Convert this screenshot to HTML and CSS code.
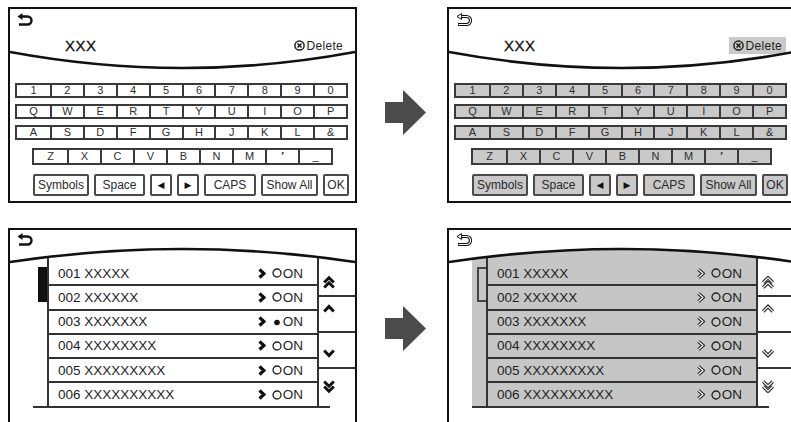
FILE: index.html
```html
<!DOCTYPE html>
<html lang="en">
<head>
  <meta charset="UTF-8">
  <title>Keyboard and list screens</title>
  <link rel="stylesheet" href="styles.css">
</head>
<body>

  <!-- icon sprite -->
  <svg class="sprite" aria-hidden="true">
    <defs>
      <symbol id="back" viewBox="0 0 16 14">
        <path d="M4,3.5 H10.5 A4,4 0 0 1 10.5,11.5 H2" fill="none" stroke="#111" stroke-width="2.4"/>
        <path d="M0.5,3.5 L5.5,0 V7 Z" fill="#111"/>
      </symbol>
      <symbol id="back-o" viewBox="0 0 16 14">
        <path d="M4,3.5 H10.5 A4,4 0 0 1 10.5,11.5 H2" fill="none" stroke="#111" stroke-width="3.2"/>
        <path d="M4,3.5 H10.5 A4,4 0 0 1 10.5,11.5 H2.6" fill="none" stroke="#fff" stroke-width="1.2"/>
        <path d="M1,3.5 L5.6,0.6 V6.4 Z" fill="#fff" stroke="#111" stroke-width="1"/>
      </symbol>
      <symbol id="delx" viewBox="0 0 11 11">
        <circle cx="5.5" cy="5.5" r="4.6" fill="none" stroke="#222" stroke-width="1.5"/>
        <path d="M3.5,3.5 L7.5,7.5 M7.5,3.5 L3.5,7.5" stroke="#222" stroke-width="1.7"/>
      </symbol>
      <symbol id="chev" viewBox="0 0 8 11">
        <polyline points="1.5,1.5 6,5.5 1.5,9.5" fill="none" stroke="#111" stroke-width="3.2"/>
      </symbol>
      <symbol id="chev-o" viewBox="0 0 8 11">
        <polyline points="1.5,1.5 6,5.5 1.5,9.5" fill="none" stroke="#222" stroke-width="3.4"/>
        <polyline points="1.5,1.5 6,5.5 1.5,9.5" fill="none" stroke="#fff" stroke-width="1.2"/>
      </symbol>
      <symbol id="ring" viewBox="0 0 10 10">
        <circle cx="5" cy="5" r="4" fill="none" stroke="#222" stroke-width="1.3"/>
      </symbol>
      <symbol id="dot" viewBox="0 0 10 10">
        <circle cx="5" cy="5.5" r="2.8" fill="#111"/>
      </symbol>
      <symbol id="up1" viewBox="0 0 12 9">
        <polyline points="1.2,7.5 6,2.5 10.8,7.5" fill="none" stroke="#111" stroke-width="3"/>
      </symbol>
      <symbol id="up2" viewBox="0 0 12 13">
        <polyline points="1.2,6.5 6,1.8 10.8,6.5" fill="none" stroke="#111" stroke-width="3"/>
        <polyline points="1.2,11.5 6,6.8 10.8,11.5" fill="none" stroke="#111" stroke-width="3"/>
      </symbol>
      <symbol id="dn1" viewBox="0 0 12 9">
        <polyline points="1.2,1.5 6,6.5 10.8,1.5" fill="none" stroke="#111" stroke-width="3"/>
      </symbol>
      <symbol id="dn2" viewBox="0 0 12 13">
        <polyline points="1.2,1.5 6,6.2 10.8,1.5" fill="none" stroke="#111" stroke-width="3"/>
        <polyline points="1.2,6.5 6,11.2 10.8,6.5" fill="none" stroke="#111" stroke-width="3"/>
      </symbol>
      <symbol id="up1-o" viewBox="0 0 12 9">
        <polyline points="1.2,7.5 6,2.5 10.8,7.5" fill="none" stroke="#222" stroke-width="3.4"/>
        <polyline points="1.2,7.5 6,2.5 10.8,7.5" fill="none" stroke="#fff" stroke-width="1.2"/>
      </symbol>
      <symbol id="up2-o" viewBox="0 0 12 13">
        <polyline points="1.2,6.5 6,1.8 10.8,6.5" fill="none" stroke="#222" stroke-width="3.4"/>
        <polyline points="1.2,6.5 6,1.8 10.8,6.5" fill="none" stroke="#fff" stroke-width="1.2"/>
        <polyline points="1.2,11.5 6,6.8 10.8,11.5" fill="none" stroke="#222" stroke-width="3.4"/>
        <polyline points="1.2,11.5 6,6.8 10.8,11.5" fill="none" stroke="#fff" stroke-width="1.2"/>
      </symbol>
      <symbol id="dn1-o" viewBox="0 0 12 9">
        <polyline points="1.2,1.5 6,6.5 10.8,1.5" fill="none" stroke="#222" stroke-width="3.4"/>
        <polyline points="1.2,1.5 6,6.5 10.8,1.5" fill="none" stroke="#fff" stroke-width="1.2"/>
      </symbol>
      <symbol id="dn2-o" viewBox="0 0 12 13">
        <polyline points="1.2,1.5 6,6.2 10.8,1.5" fill="none" stroke="#222" stroke-width="3.4"/>
        <polyline points="1.2,1.5 6,6.2 10.8,1.5" fill="none" stroke="#fff" stroke-width="1.2"/>
        <polyline points="1.2,6.5 6,11.2 10.8,6.5" fill="none" stroke="#222" stroke-width="3.4"/>
        <polyline points="1.2,6.5 6,11.2 10.8,6.5" fill="none" stroke="#fff" stroke-width="1.2"/>
      </symbol>
      <symbol id="bigarrow" viewBox="0 0 41 45">
        <polygon points="0,12 18,12 18,0 41,22.5 18,45 18,33 0,33" fill="#4b4b4b"/>
      </symbol>
    </defs>
  </svg>

  <div class="board">

    <!-- keyboard, normal -->
    <div class="screen">
      <svg class="back"><use href="#back"/></svg>
      <div class="entry">
        <span class="word">XXX</span>
        <span class="del"><svg class="delx"><use href="#delx"/></svg>Delete</span>
      </div>
      <svg class="smile" viewBox="0 0 345 20"><path d="M0,2 Q172.5,34 345,2"/></svg>
      <div class="kb">
        <div class="krow"><span>1</span><span>2</span><span>3</span><span>4</span><span>5</span><span>6</span><span>7</span><span>8</span><span>9</span><span>0</span></div>
        <div class="krow"><span>Q</span><span>W</span><span>E</span><span>R</span><span>T</span><span>Y</span><span>U</span><span>I</span><span>O</span><span>P</span></div>
        <div class="krow"><span>A</span><span>S</span><span>D</span><span>F</span><span>G</span><span>H</span><span>J</span><span>K</span><span>L</span><span>&amp;</span></div>
        <div class="krow z"><span>Z</span><span>X</span><span>C</span><span>V</span><span>B</span><span>N</span><span>M</span><span class="tick">′</span><span>_</span></div>
        <div class="fnrow">
          <span class="fn w-sym">Symbols</span>
          <span class="fn w-spc">Space</span>
          <span class="fn w-tri tri">◀</span>
          <span class="fn w-tri tri">▶</span>
          <span class="fn w-caps">CAPS</span>
          <span class="fn w-all">Show All</span>
          <span class="fn w-ok">OK</span>
        </div>
      </div>
    </div>

    <div class="arrow"><svg><use href="#bigarrow"/></svg></div>

    <!-- keyboard, greyed -->
    <div class="screen dim">
      <svg class="back"><use href="#back-o"/></svg>
      <div class="entry">
        <span class="word">XXX</span>
        <span class="del"><svg class="delx"><use href="#delx"/></svg>Delete</span>
      </div>
      <svg class="smile" viewBox="0 0 345 20"><path d="M0,2 Q172.5,34 345,2"/></svg>
      <div class="kb">
        <div class="krow"><span>1</span><span>2</span><span>3</span><span>4</span><span>5</span><span>6</span><span>7</span><span>8</span><span>9</span><span>0</span></div>
        <div class="krow"><span>Q</span><span>W</span><span>E</span><span>R</span><span>T</span><span>Y</span><span>U</span><span>I</span><span>O</span><span>P</span></div>
        <div class="krow"><span>A</span><span>S</span><span>D</span><span>F</span><span>G</span><span>H</span><span>J</span><span>K</span><span>L</span><span>&amp;</span></div>
        <div class="krow z"><span>Z</span><span>X</span><span>C</span><span>V</span><span>B</span><span>N</span><span>M</span><span class="tick">′</span><span>_</span></div>
        <div class="fnrow">
          <span class="fn w-sym">Symbols</span>
          <span class="fn w-spc">Space</span>
          <span class="fn w-tri tri">◀</span>
          <span class="fn w-tri tri">▶</span>
          <span class="fn w-caps">CAPS</span>
          <span class="fn w-all">Show All</span>
          <span class="fn w-ok">OK</span>
        </div>
      </div>
    </div>

    <!-- list, normal -->
    <div class="screen">
      <svg class="back lback"><use href="#back"/></svg>
      <svg class="arch" viewBox="0 0 345 20">
        <path class="mask" d="M0,0 V16 Q172.5,-10 345,16 V0 Z"/>
        <path class="line" d="M0,16 Q172.5,-10 345,16"/>
      </svg>
      <div class="list">
        <div class="track"><div class="thumb"></div></div>
        <div class="rows">
          <div class="row">001 XXXXX<span class="state"><svg class="chev"><use href="#chev"/></svg><svg class="ring"><use href="#ring"/></svg>ON</span></div>
          <div class="row">002 XXXXXX<span class="state"><svg class="chev"><use href="#chev"/></svg><svg class="ring"><use href="#ring"/></svg>ON</span></div>
          <div class="row">003 XXXXXXX<span class="state"><svg class="chev"><use href="#chev"/></svg><svg class="ring"><use href="#dot"/></svg>ON</span></div>
          <div class="row">004 XXXXXXXX<span class="state"><svg class="chev"><use href="#chev"/></svg><svg class="ring"><use href="#ring"/></svg>ON</span></div>
          <div class="row">005 XXXXXXXXX<span class="state"><svg class="chev"><use href="#chev"/></svg><svg class="ring"><use href="#ring"/></svg>ON</span></div>
          <div class="row">006 XXXXXXXXXX<span class="state"><svg class="chev"><use href="#chev"/></svg><svg class="ring"><use href="#ring"/></svg>ON</span></div>
        </div>
        <div class="side">
          <div class="s1"><svg class="ic2"><use href="#up2"/></svg></div>
          <div class="s2"><svg class="ic1"><use href="#up1"/></svg></div>
          <div class="s3"><svg class="ic1"><use href="#dn1"/></svg></div>
          <div class="s4"><svg class="ic2"><use href="#dn2"/></svg></div>
        </div>
      </div>
      <div class="base"></div>
    </div>

    <div class="arrow low"><svg><use href="#bigarrow"/></svg></div>

    <!-- list, greyed -->
    <div class="screen dim">
      <svg class="back lback"><use href="#back-o"/></svg>
      <svg class="arch" viewBox="0 0 345 20">
        <path class="mask" d="M0,0 V16 Q172.5,-10 345,16 V0 Z"/>
        <path class="line" d="M0,16 Q172.5,-10 345,16"/>
      </svg>
      <div class="list">
        <div class="track"><div class="thumb"></div></div>
        <div class="rows">
          <div class="row">001 XXXXX<span class="state"><svg class="chev"><use href="#chev-o"/></svg><svg class="ring"><use href="#ring"/></svg>ON</span></div>
          <div class="row">002 XXXXXX<span class="state"><svg class="chev"><use href="#chev-o"/></svg><svg class="ring"><use href="#ring"/></svg>ON</span></div>
          <div class="row">003 XXXXXXX<span class="state"><svg class="chev"><use href="#chev-o"/></svg><svg class="ring"><use href="#ring"/></svg>ON</span></div>
          <div class="row">004 XXXXXXXX<span class="state"><svg class="chev"><use href="#chev-o"/></svg><svg class="ring"><use href="#ring"/></svg>ON</span></div>
          <div class="row">005 XXXXXXXXX<span class="state"><svg class="chev"><use href="#chev-o"/></svg><svg class="ring"><use href="#ring"/></svg>ON</span></div>
          <div class="row">006 XXXXXXXXXX<span class="state"><svg class="chev"><use href="#chev-o"/></svg><svg class="ring"><use href="#ring"/></svg>ON</span></div>
        </div>
        <div class="side">
          <div class="s1"><svg class="ic2"><use href="#up2-o"/></svg></div>
          <div class="s2"><svg class="ic1"><use href="#up1-o"/></svg></div>
          <div class="s3"><svg class="ic1"><use href="#dn1-o"/></svg></div>
          <div class="s4"><svg class="ic2"><use href="#dn2-o"/></svg></div>
        </div>
      </div>
      <div class="base"></div>
    </div>

  </div>

</body>
</html>
```

FILE: styles.css
```css
* {
  box-sizing: border-box;
}

body {
  margin: 0;
  width: 791px;
  height: 422px;
  overflow: hidden;
  background: #fff;
  font-family: "Liberation Sans", Arial, sans-serif;
  color: #1e1e1e;
}

.sprite {
  position: absolute;
  width: 0;
  height: 0;
}

.board {
  display: grid;
  grid-template-columns: 349px 90px 349px;
  grid-template-rows: 196px 214px;
  row-gap: 25px;
  padding: 7px 0 0 8px;
}

.screen {
  border: 2px solid #111;
  background: #fff;
  overflow: hidden;
}

.back {
  display: block;
  width: 16px;
  height: 14px;
  margin: 4px 0 0 7px;
}

/* keyboard screen */
.entry {
  display: flex;
  justify-content: space-between;
  align-items: center;
  height: 17px;
  margin-top: 10px;
  padding: 0 8px 0 55px;
}

.word {
  font-size: 15px;
  line-height: 17px;
  letter-spacing: 0.5px;
  color: #111;
  -webkit-text-stroke: 0.3px #111;
}

.del {
  display: flex;
  align-items: center;
  gap: 2px;
  height: 17px;
  padding: 0 4px;
  font-size: 12px;
  letter-spacing: 0.3px;
  color: #222;
}

.delx {
  width: 11px;
  height: 11px;
}

.smile {
  display: block;
  width: 345px;
  height: 20px;
  margin-top: -4px;
}

.smile path {
  fill: none;
  stroke: #111;
  stroke-width: 2.6;
}

.kb {
  margin: 13px 0 0 5px;
}

.krow {
  display: grid;
  grid-template-columns: repeat(10, 1fr);
  width: 333px;
  height: 15px;
  margin-top: 6px;
  border: 2px solid #3a3a3a;
}

.krow:first-child {
  margin-top: 0;
}

.krow span {
  border-left: 2px solid #3a3a3a;
  text-align: center;
  font-size: 11px;
  line-height: 11px;
  color: #2e2e2e;
}

.krow span:first-child {
  border-left: 0;
}

.krow.z {
  grid-template-columns: repeat(9, 1fr);
  width: 301px;
  height: 17px;
  margin: 8px 0 0 17px;
}

.krow.z span {
  line-height: 13px;
}

.krow .tick {
  font-weight: bold;
}

.fnrow {
  display: flex;
  gap: 5px;
  height: 22px;
  margin: 9px 0 0 18px;
}

.fn {
  border: 2px solid #4a4a4a;
  border-radius: 2px;
  text-align: center;
  font-size: 12px;
  line-height: 18px;
  color: #2a2a2a;
}

.fn.tri {
  font-family: "DejaVu Sans", sans-serif;
  font-size: 9px;
  color: #111;
}

.w-sym { width: 56px; }
.w-spc { width: 51px; }
.w-tri { width: 22px; }
.w-caps { width: 52px; }
.w-all { width: 57px; }
.w-ok { width: 26px; }

.dim .krow span,
.dim .fn,
.dim .del {
  background: #c9c9c9;
}

/* arrows between screens */
.arrow {
  padding: 83px 0 0 28px;
}

.arrow.low {
  padding-top: 78px;
}

.arrow svg {
  display: block;
  width: 41px;
  height: 45px;
}

/* list screen */
.lback {
  margin-top: 3px;
}

.arch {
  display: block;
  position: relative;
  z-index: 1;
  width: 345px;
  height: 20px;
  margin: -1px 0 -20px;
}

.arch .mask {
  fill: #fff;
}

.arch .line {
  fill: none;
  stroke: #111;
  stroke-width: 2.6;
}

.list {
  display: flex;
  height: 160px;
  margin-left: 23px;
}

.track {
  width: 14px;
  padding: 21px 0 0 5px;
}

.thumb {
  width: 9px;
  height: 35px;
  background: #111;
}

.rows {
  width: 270px;
  padding-top: 16px;
  border-left: 2px solid #333;
}

.row {
  display: flex;
  justify-content: space-between;
  align-items: center;
  height: 24.25px;
  padding: 0 14px 0 9px;
  border-bottom: 2px solid #333;
  font-size: 13.5px;
  color: #1e1e1e;
}

.row:last-child {
  height: 23px;
  border-bottom: 0;
}

.state {
  display: flex;
  align-items: center;
}

.chev {
  width: 8px;
  height: 11px;
  margin-right: 6px;
}

.ring {
  width: 10px;
  height: 10px;
  margin-right: 1px;
}

.side {
  display: flex;
  flex-direction: column;
  width: 38px;
  border-left: 2px solid #333;
}

.side div {
  display: flex;
  padding-left: 4px;
  border-bottom: 2px solid #333;
}

.side .s1 {
  height: 51px;
  align-items: flex-end;
  padding-bottom: 6px;
}

.side .s2 {
  height: 36px;
  align-items: flex-start;
  padding-top: 7px;
}

.side .s3 {
  height: 36px;
  align-items: flex-end;
  padding-bottom: 9px;
}

.side .s4 {
  flex: 1;
  align-items: flex-start;
  padding-top: 11px;
  border-bottom: 0;
}

.ic1 {
  width: 12px;
  height: 9px;
}

.ic2 {
  width: 12px;
  height: 13px;
}

.base {
  width: 297px;
  margin-left: 23px;
  border-top: 2px solid #333;
}

.dim .track,
.dim .rows {
  background: #c6c6c6;
}

.dim .thumb {
  background: transparent;
  border: 2px solid #444;
  border-right: 0;
}
```
